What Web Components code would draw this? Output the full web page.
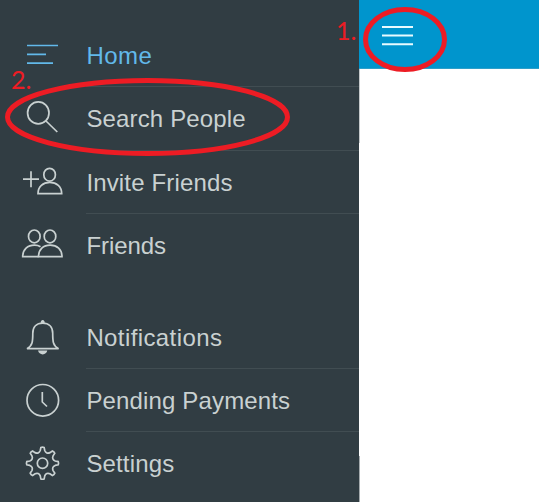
<!DOCTYPE html>
<html lang="en">
<head>
<meta charset="utf-8">
<title>Menu</title>
<style>
  body {
    margin: 0;
    font-family: "Liberation Sans", Arial, sans-serif;
    background: #fff;
  }
</style>
</head>
<body>
<app-screen>
  <side-menu slot="menu">
    <menu-group>
      <menu-item icon="home" active style="--track:0.5px">Home</menu-item>
      <menu-item icon="search">Search People</menu-item>
      <menu-item icon="invite">Invite Friends</menu-item>
      <menu-item icon="friends" style="--track:-0.05px">Friends</menu-item>
    </menu-group>
    <menu-group>
      <menu-item icon="bell" style="--track:0.4px">Notifications</menu-item>
      <menu-item icon="clock">Pending Payments</menu-item>
      <menu-item icon="gear">Settings</menu-item>
    </menu-group>
  </side-menu>
  <top-bar></top-bar>
  <step-mark slot="marks" style="--x:363px; --y:7px; --tx:-27px; --ty:9px" width="84" height="65">1.</step-mark>
  <step-mark slot="marks" style="--x:5px; --y:78px; --tx:6px; --ty:-13px" width="285" height="78">2.</step-mark>
</app-screen>

<script>
// outline of an eight-toothed gear around cx, cy
function gearPath(cx, cy) {
  const at = (r, deg) => {
    const a = (deg - 90) * Math.PI / 180;
    return (cx + r * Math.cos(a)).toFixed(2) + " " + (cy + r * Math.sin(a)).toFixed(2);
  };
  let d = "M" + at(15.8, -6);
  for (let t = 0; t < 360; t += 45) {
    d += `Q${at(16.4, t)} ${at(15.8, t + 6)}L${at(12.9, t + 10)}`;
    d += `C${at(10.8, t + 17)} ${at(10.8, t + 28)} ${at(12.9, t + 35)}L${at(15.8, t + 39)}`;
  }
  return d + "Z";
}

const ICONS = {
  home: `<path d="M27 21.5H58M27 30.3H46M27 39.1H53"/>`,
  search: `<ellipse cx="38.3" cy="25.9" rx="10.7" ry="11"/><path d="M46 34L57.3 45"/>`,
  invite: `<path d="M23 28.2H39M31 20.2V36.2"/>
    <ellipse cx="49.6" cy="23.7" rx="5.8" ry="6.4"/>
    <path d="M38 42.6C38 35.5 43 31.3 49.8 31.3S61.7 35.5 61.7 42.6Z"/>`,
  friends: `<ellipse cx="34.3" cy="22.4" rx="5.8" ry="6.4"/>
    <ellipse cx="50" cy="22.4" rx="5.8" ry="6.4"/>
    <path d="M38.5 42.6C38.5 35.5 43.4 31.2 50.2 31.2S62 35.5 62 42.6Z"/>
    <path d="M38.5 42.6H22.7C22.7 35.5 27.7 31.2 34.5 31.2Q38 31.2 40.5 32.8"/>`,
  bell: `<path d="M42.7 17.2C36.5 17.2 32.8 21.2 32.8 27.2C32.8 35.5 32.5 40 27 42.7H58.6C53 40 52.7 35.5 52.7 27.2C52.7 21.2 49 17.2 42.7 17.2Z"/>
    <path class="fill" d="M40.8 17V15.5Q42.7 12.6 44.6 15.5V17ZM38 44.6H47.3Q46.3 48.4 42.7 48.4T38 44.6Z"/>`,
  clock: `<circle cx="42.8" cy="31.3" r="15.8"/><path d="M42.3 23V33L47 37.5"/>`,
  gear: `<path d="${gearPath(42.5, 31.2)}"/><circle cx="42.5" cy="31.2" r="5.2"/>`
};

class AppScreen extends HTMLElement {
  constructor() {
    super();
    this.attachShadow({ mode: "open" });
  }
  connectedCallback() {
    this.shadowRoot.innerHTML = /*HTML*/ `
      <style>
        :host {
          display: grid;
          grid-template-columns: 359px 1fr;
          position: relative;
          height: 502px;
          overflow: hidden;
        }
      </style>
      <slot name="menu"></slot>
      <slot></slot>
      <slot name="marks"></slot>`;
  }
}

class SideMenu extends HTMLElement {
  constructor() {
    super();
    this.attachShadow({ mode: "open" });
  }
  connectedCallback() {
    this.shadowRoot.innerHTML = /*HTML*/ `
      <style>
        :host {
          display: flex;
          flex-direction: column;
          gap: 28px;
          box-sizing: border-box;
          padding-top: 24px;
          height: 502px;
          overflow: hidden;
          background: #313d43;
        }
      </style>
      <slot></slot>`;
  }
}

class MenuGroup extends HTMLElement {
  constructor() {
    super();
    this.attachShadow({ mode: "open" });
  }
  connectedCallback() {
    this.shadowRoot.innerHTML = /*HTML*/ `
      <style>
        :host { display: block; }
        ::slotted(:last-child) { --line: transparent; }
      </style>
      <slot></slot>`;
  }
}

class MenuItem extends HTMLElement {
  constructor() {
    super();
    this.attachShadow({ mode: "open" });
  }
  connectedCallback() {
    this.shadowRoot.innerHTML = /*HTML*/ `
      <style>
        :host {
          display: flex;
          height: 63.4px;
          color: #c9d1d1;
        }
        :host([active]) { color: #62b9ea; }
        svg {
          flex: none;
          width: 86px;
          height: 63px;
          fill: none;
          stroke: currentColor;
          stroke-width: 1.7;
        }
        .fill {
          fill: currentColor;
          stroke: none;
        }
        .label {
          flex: 1;
          box-sizing: border-box;
          padding-left: 0.4px;
          border-bottom: 1px solid var(--line, #414d52);
          font-size: 24px;
          line-height: 63px;
          letter-spacing: var(--track, 0.15px);
          white-space: nowrap;
        }
      </style>
      <svg viewBox="0 0 86 63">${ICONS[this.getAttribute("icon")]}</svg>
      <div class="label"><slot></slot></div>`;
  }
}

class TopBar extends HTMLElement {
  constructor() {
    super();
    this.attachShadow({ mode: "open" });
  }
  connectedCallback() {
    this.shadowRoot.innerHTML = /*HTML*/ `
      <style>
        :host {
          display: block;
          background: linear-gradient(#c5c9cb, #c5c9cb) 0 0 / 1px 143px no-repeat,
            linear-gradient(#a5abae, #a5abae) 0 100% / 1px 46px no-repeat, #fff;
        }
        header {
          box-sizing: border-box;
          height: 69px;
          padding: 26px 23px;
          background: #0095cd;
          border-bottom: 1px solid #2e9fc9;
        }
        svg {
          display: block;
          stroke: #e8fbff;
          stroke-width: 2;
        }
      </style>
      <header>
        <svg width="32" height="20"><path d="M0 1H31M0 9.5H31M0 18.2H31"/></svg>
      </header>`;
  }
}

// numbered ring laid over the screen
class StepMark extends HTMLElement {
  constructor() {
    super();
    this.attachShadow({ mode: "open" });
  }
  connectedCallback() {
    const w = +this.getAttribute("width");
    const h = +this.getAttribute("height");
    this.shadowRoot.innerHTML = /*HTML*/ `
      <style>
        :host {
          display: block;
          position: absolute;
          left: var(--x);
          top: var(--y);
          color: #ed1c24;
        }
        svg { display: block; }
        span {
          position: absolute;
          left: var(--tx);
          top: var(--ty);
          font: 25px/28px Lato, sans-serif;
        }
      </style>
      <svg width="${w}" height="${h}">
        <ellipse cx="${w / 2}" cy="${h / 2}" rx="${w / 2 - 2.5}" ry="${h / 2 - 2.5}"
          fill="none" stroke="currentColor" stroke-width="5"/>
      </svg>
      <span><slot></slot></span>`;
  }
}

customElements.define("app-screen", AppScreen);
customElements.define("side-menu", SideMenu);
customElements.define("menu-group", MenuGroup);
customElements.define("menu-item", MenuItem);
customElements.define("top-bar", TopBar);
customElements.define("step-mark", StepMark);
</script>
</body>
</html>
